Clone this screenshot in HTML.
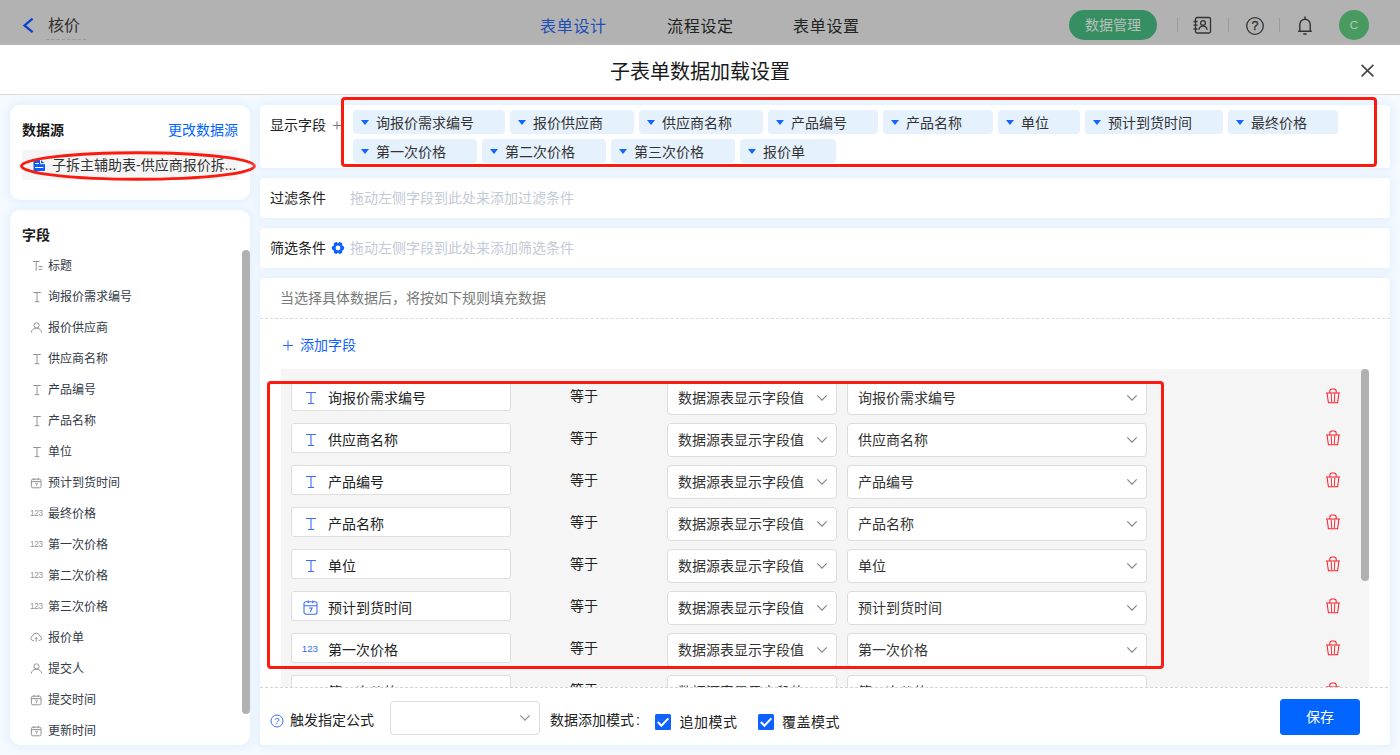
<!DOCTYPE html>
<html lang="zh-CN">
<head>
<meta charset="utf-8">
<title>子表单数据加载设置</title>
<style>
*{box-sizing:border-box;margin:0;padding:0}
html,body{width:1400px;height:755px;overflow:hidden}
body{font-family:"Liberation Sans","Noto Sans CJK SC",sans-serif;font-size:14px;color:#222;background:#f3f8ff;position:relative}
.abs{position:absolute}
.t{position:absolute;white-space:nowrap;line-height:1}
#hdr{left:0;top:0;width:1400px;height:45px;background:linear-gradient(#b2b2b2 0,#b2b2b2 41px,#b8b8b8 45px)}
#ttl{left:0;top:45px;width:1400px;height:50px;background:#fff;border-bottom:1px solid #d9d9d9}
#bg{left:0;top:95px;width:1400px;height:660px;background:#f5faff}
.card{position:absolute;background:#fff;border-radius:10px;box-shadow:0 0 9px 3px #e4f0fe}
.rc{position:absolute;background:#fff;border-radius:4px;left:260px;width:1130px;box-shadow:0 0 9px 3px #e4f0fe}
.tag{position:absolute;height:24px;border-radius:4px;background:#e6f1fe;font-size:14px;line-height:26px;color:#333;padding-left:23px;white-space:nowrap}
.tag:before{content:"";position:absolute;left:8.100px;top:10px;border-left:4.700px solid transparent;border-right:4.700px solid transparent;border-top:5px solid #1166ff}
.fi{position:absolute;left:48px;font-size:12px;color:#333a48;line-height:14px;white-space:nowrap}
.ibox{position:absolute;width:220px;height:30px;background:#fff;border:1px solid #dedede;border-radius:3px}
.itx{position:absolute;font-size:14px;color:#222;line-height:16px;white-space:nowrap}
.sel{position:absolute;height:34px;background:#fff;border:1px solid #dcdcdc;border-radius:4px}
.eq{position:absolute;font-size:14px;color:#222;line-height:16px;white-space:nowrap}
</style>
</head>
<body>
<div id="hdr" class="abs">
<svg class="abs" style="left:20px;top:14px" width="16" height="22" viewBox="0 0 16 22"><path d="M12.600 4.600 L4.500 11.400 L12.600 18.200" fill="none" stroke="#0d42cc" stroke-width="2.300"/></svg>
<div class="t" style="left:48px;top:18px;font-size:16px;color:#2e2e2e;">核价</div>
<div class="abs" style="left:46px;top:39px;width:40px;border-top:1px dashed #999"></div>
<div class="t" style="left:540px;top:18.5px;font-size:16px;color:#1c4db8;letter-spacing:.7px">表单设计</div>
<div class="t" style="left:667px;top:18.5px;font-size:16px;color:#222;letter-spacing:.7px">流程设定</div>
<div class="t" style="left:793px;top:18.5px;font-size:16px;color:#222;letter-spacing:.7px">表单设置</div>
<div class="abs" style="left:1069px;top:10px;width:88px;height:30px;border-radius:15px;background:#368f62;color:#b9bfbb;font-size:14px;line-height:31px;text-align:center">数据管理</div>
<div class="abs" style="left:1177px;top:18px;width:1px;height:14px;background:#9b9b9b"></div>
<div class="abs" style="left:1228px;top:18px;width:1px;height:14px;background:#9b9b9b"></div>
<div class="abs" style="left:1279px;top:18px;width:1px;height:14px;background:#9b9b9b"></div>
<svg class="abs" style="left:1192px;top:16px" width="20" height="19" viewBox="0 0 20 19"><g fill="none" stroke="#333" stroke-width="1.300"><rect x="3.500" y="1.500" width="15" height="15.500" rx="1.500"/><circle cx="11" cy="7" r="2.400"/><path d="M6.800 13.800c.6-2.600 2.200-3.600 4.200-3.600s3.600 1 4.200 3.600"/><path d="M1.500 5.500h4M1.500 9.200h4M1.500 13h4"/></g></svg>
<svg class="abs" style="left:1245px;top:15.500px" width="20" height="20" viewBox="0 0 20 20"><circle cx="10" cy="10" r="8.300" fill="none" stroke="#333" stroke-width="1.300"/><text x="10" y="14.400" font-size="12.500" text-anchor="middle" fill="#333" stroke="#333" stroke-width=".35" font-family="Liberation Sans, sans-serif">?</text></svg>
<svg class="abs" style="left:1295px;top:14px" width="20" height="22" viewBox="0 0 20 22"><g fill="none" stroke="#333" stroke-width="1.400"><path d="M3.200 17.300h13.600M4.800 17.300V10.500a5.200 5.200 0 0 1 10.400 0v6.800"/><path d="M10 5.200V2.600M8.300 20h3.400"/></g></svg>
<div class="abs" style="left:1339px;top:10px;width:30px;height:30px;border-radius:15px;background:#489a61;color:#b6cdb8;font-size:11.500px;line-height:31px;text-align:center">C</div>
</div>
<div id="ttl" class="abs">
<div class="t" style="left:0;width:1400px;text-align:center;top:17px;font-size:20px;color:#1a1a1a">子表单数据加载设置</div>
<svg class="abs" style="left:1360px;top:17.500px" width="15" height="15" viewBox="0 0 15 15"><path d="M1.600 1.900l11.800 11.400M13.400 1.900l-11.800 11.400" stroke="#474747" stroke-width="1.700" fill="none"/></svg>
</div>
<div id="bg" class="abs"></div>
<div class="card" style="left:10px;top:105px;width:240px;height:95px"></div>
<div class="card" style="left:10px;top:210px;width:240px;height:535px"></div>
<div class="t" style="left:22px;top:123px;font-size:14px;color:#1a1a1a;font-weight:bold">数据源</div>
<div class="t" style="left:168px;top:123px;font-size:14px;color:#0265ff;">更改数据源</div>
<div class="abs" style="left:22px;top:150px;width:216px;height:30px;background:#f5f5f5;border-radius:2px"></div>
<svg class="abs" style="left:33px;top:160px" width="13" height="11" viewBox="0 0 13 11"><path d="M.5 0h7.500l4 3.700V11H.5z" fill="#0b5ff8"/><path d="M7.500 0v3.700h4.500" fill="none" stroke="#fff" stroke-width="1"/><path d="M2.100 3.500h3.800M2.100 7.500h8.200" stroke="#fff" stroke-width="1"/></svg>
<div class="t" style="left:52px;top:158px;font-size:14px;color:#333;">子拆主辅助表-供应商报价拆...</div>
<svg class="abs" style="left:14px;top:146.600px" width="250" height="38" viewBox="0 0 250 38"><ellipse cx="124" cy="19" rx="116.500" ry="13.300" fill="none" stroke="#fb1a10" stroke-width="2.900"/></svg>
<div class="t" style="left:22px;top:228px;font-size:14px;color:#1a1a1a;font-weight:bold">字段</div>
<svg class="abs" style="left:31px;top:259.5px" width="13" height="12" viewBox="0 0 13 12"><path d="M1.900 1.500h6.700M5.200 1.500v9.200M7.500 6.500h3.900M7.500 9.300h3.900" fill="none" stroke="#939393" stroke-width="1"/></svg>
<div class="fi" style="top:259.0px">标题</div>
<svg class="abs" style="left:31px;top:290.5px" width="12" height="12" viewBox="0 0 12 12"><path d="M2.200 1.500h7.600M3.700 10.700h4.600M6 1.500v9.200" fill="none" stroke="#939393" stroke-width="1"/></svg>
<div class="fi" style="top:290.0px">询报价需求编号</div>
<svg class="abs" style="left:29.5px;top:322.0px" width="13" height="11" viewBox="0 0 13 11"><g fill="none" stroke="#939393" stroke-width="1"><circle cx="6.500" cy="3.400" r="2.600"/><path d="M1.200 10.600c.5-2.900 2.500-4.400 5.300-4.400s4.800 1.500 5.300 4.400"/></g></svg>
<div class="fi" style="top:321.0px">报价供应商</div>
<svg class="abs" style="left:31px;top:352.5px" width="12" height="12" viewBox="0 0 12 12"><path d="M2.200 1.500h7.600M3.700 10.700h4.600M6 1.500v9.200" fill="none" stroke="#939393" stroke-width="1"/></svg>
<div class="fi" style="top:352.0px">供应商名称</div>
<svg class="abs" style="left:31px;top:383.5px" width="12" height="12" viewBox="0 0 12 12"><path d="M2.200 1.500h7.600M3.700 10.700h4.600M6 1.500v9.200" fill="none" stroke="#939393" stroke-width="1"/></svg>
<div class="fi" style="top:383.0px">产品编号</div>
<svg class="abs" style="left:31px;top:414.5px" width="12" height="12" viewBox="0 0 12 12"><path d="M2.200 1.500h7.600M3.700 10.700h4.600M6 1.500v9.200" fill="none" stroke="#939393" stroke-width="1"/></svg>
<div class="fi" style="top:414.0px">产品名称</div>
<svg class="abs" style="left:31px;top:445.5px" width="12" height="12" viewBox="0 0 12 12"><path d="M2.200 1.500h7.600M3.700 10.700h4.600M6 1.500v9.200" fill="none" stroke="#939393" stroke-width="1"/></svg>
<div class="fi" style="top:445.0px">单位</div>
<svg class="abs" style="left:30px;top:476.5px" width="12" height="12" viewBox="0 0 12 12"><g fill="none" stroke="#939393" stroke-width="1"><rect x="1.400" y="2.200" width="9.600" height="8.600" rx="1.500"/><path d="M1.400 4.600h9.600M4 1v2.200M8.400 1v2.200"/><path d="M5 6.200h2.500L6.200 9.300" stroke-width=".85"/></g></svg>
<div class="fi" style="top:476.0px">预计到货时间</div>
<div class="t" style="left:30px;top:509.5px;font-size:8.200px;color:#939393;letter-spacing:-.3px">123</div>
<div class="fi" style="top:507.0px">最终价格</div>
<div class="t" style="left:30px;top:540.5px;font-size:8.200px;color:#939393;letter-spacing:-.3px">123</div>
<div class="fi" style="top:538.0px">第一次价格</div>
<div class="t" style="left:30px;top:571.5px;font-size:8.200px;color:#939393;letter-spacing:-.3px">123</div>
<div class="fi" style="top:569.0px">第二次价格</div>
<div class="t" style="left:30px;top:602.5px;font-size:8.200px;color:#939393;letter-spacing:-.3px">123</div>
<div class="fi" style="top:600.0px">第三次价格</div>
<svg class="abs" style="left:29.8px;top:631.9px" width="12.400" height="10.600" viewBox="0 0 14 12"><g fill="none" stroke="#939393" stroke-width="1.100"><path d="M4.600 9.600H3.600a2.600 2.600 0 0 1-.5-5.150A4 4 0 0 1 10.900 4.400a2.650 2.650 0 0 1-.3 5.200h-1"/><path d="M7 11V6.400M5.300 8L7 6.300 8.700 8"/></g></svg>
<div class="fi" style="top:631.0px">报价单</div>
<svg class="abs" style="left:29.5px;top:663.0px" width="13" height="11" viewBox="0 0 13 11"><g fill="none" stroke="#939393" stroke-width="1"><circle cx="6.500" cy="3.400" r="2.600"/><path d="M1.200 10.600c.5-2.900 2.500-4.400 5.300-4.400s4.800 1.500 5.300 4.400"/></g></svg>
<div class="fi" style="top:662.0px">提交人</div>
<svg class="abs" style="left:30px;top:693.5px" width="12" height="12" viewBox="0 0 12 12"><g fill="none" stroke="#939393" stroke-width="1"><rect x="1.400" y="2.200" width="9.600" height="8.600" rx="1.500"/><path d="M1.400 4.600h9.600M4 1v2.200M8.400 1v2.200"/><path d="M5 6.200h2.500L6.200 9.300" stroke-width=".85"/></g></svg>
<div class="fi" style="top:693.0px">提交时间</div>
<svg class="abs" style="left:30px;top:724.5px" width="12" height="12" viewBox="0 0 12 12"><g fill="none" stroke="#939393" stroke-width="1"><rect x="1.400" y="2.200" width="9.600" height="8.600" rx="1.500"/><path d="M1.400 4.600h9.600M4 1v2.200M8.400 1v2.200"/><path d="M5 6.200h2.500L6.200 9.300" stroke-width=".85"/></g></svg>
<div class="fi" style="top:724.0px">更新时间</div>
<div class="abs" style="left:242px;top:250px;width:8px;height:464px;border-radius:4px;background:#b1b1b1"></div>
<div class="rc" style="top:105px;height:63px"></div>
<div class="rc" style="top:178px;height:40px"></div>
<div class="rc" style="top:228px;height:40px"></div>
<div class="rc" style="top:278px;height:467px"></div>
<div class="t" style="left:270px;top:118px;font-size:14px;color:#222;">显示字段</div>
<svg class="abs" style="left:332px;top:120px" width="10" height="10" viewBox="0 0 10 10"><path d="M1 5.500h8M5 1.500v8" stroke="#777" stroke-width="1" fill="none"/></svg>
<div class="tag" style="left:353px;top:110px;width:152px">询报价需求编号</div>
<div class="tag" style="left:510px;top:110px;width:124px">报价供应商</div>
<div class="tag" style="left:639px;top:110px;width:124px">供应商名称</div>
<div class="tag" style="left:768px;top:110px;width:110px">产品编号</div>
<div class="tag" style="left:883px;top:110px;width:110px">产品名称</div>
<div class="tag" style="left:998px;top:110px;width:82px">单位</div>
<div class="tag" style="left:1085px;top:110px;width:138px">预计到货时间</div>
<div class="tag" style="left:1228px;top:110px;width:110px">最终价格</div>
<div class="tag" style="left:353px;top:139px;width:124px">第一次价格</div>
<div class="tag" style="left:482px;top:139px;width:124px">第二次价格</div>
<div class="tag" style="left:611px;top:139px;width:124px">第三次价格</div>
<div class="tag" style="left:740px;top:139px;width:96px">报价单</div>
<div class="abs" style="left:341px;top:97px;width:1036px;height:70px;border:3px solid #fb1a10;border-radius:4px"></div>
<div class="t" style="left:270px;top:191px;font-size:14px;color:#222;">过滤条件</div>
<div class="t" style="left:350px;top:191px;font-size:14px;color:#c3cad6;">拖动左侧字段到此处来添加过滤条件</div>
<div class="t" style="left:270px;top:241px;font-size:14px;color:#222;">筛选条件</div>
<svg class="abs" style="left:330.500px;top:241px" width="14" height="14" viewBox="-7 -7 14 14"><g fill="#0d62ff"><circle r="5.100"/><rect x="-2.100" y="-6.100" width="4.200" height="4" rx="1.400" transform="rotate(30)"/><rect x="-2.100" y="-6.100" width="4.200" height="4" rx="1.400" transform="rotate(90)"/><rect x="-2.100" y="-6.100" width="4.200" height="4" rx="1.400" transform="rotate(150)"/><rect x="-2.100" y="-6.100" width="4.200" height="4" rx="1.400" transform="rotate(210)"/><rect x="-2.100" y="-6.100" width="4.200" height="4" rx="1.400" transform="rotate(270)"/><rect x="-2.100" y="-6.100" width="4.200" height="4" rx="1.400" transform="rotate(330)"/></g><circle r="2.400" fill="#fff"/></svg>
<div class="t" style="left:350px;top:241px;font-size:14px;color:#c3cad6;">拖动左侧字段到此处来添加筛选条件</div>
<div class="t" style="left:280px;top:291px;font-size:14px;color:#7a7a7a;">当选择具体数据后，将按如下规则填充数据</div>
<div class="abs" style="left:260px;top:318px;width:1130px;border-top:1px dashed #dcdcdc"></div>
<svg class="abs" style="left:283px;top:340px" width="10" height="11" viewBox="0 0 10 11"><path d="M0 5.500h10M5 .5v10" stroke="#2a6bff" stroke-width="1" fill="none"/></svg>
<div class="t" style="left:300px;top:338px;font-size:14px;color:#0f62fe;">添加字段</div>
<div class="abs" id="ga" style="left:281px;top:369px;width:1088px;height:318px;background:#f5f5f5;overflow:hidden">
<div class="ibox" style="left:10px;top:12px"></div>
<svg class="abs" style="left:23px;top:22px" width="14" height="14" viewBox="0 0 14 14"><path d="M2 1.500h10M4 12.500h6M7 1.500v11" fill="none" stroke="#3b6cf6" stroke-width="1.100"/></svg>
<div class="itx" style="left:47px;top:21px">询报价需求编号</div>
<div class="eq" style="left:289px;top:19px">等于</div>
<div class="sel" style="left:386px;top:12px;width:170px"></div>
<div class="itx" style="left:397px;top:21px;color:#333">数据源表显示字段值</div>
<svg class="abs" style="left:534.5px;top:24.8px" width="12" height="8" viewBox="0 0 12 8"><path d="M1.300 1.300l4.700 4.900 4.700-4.900" fill="none" stroke="#808080" stroke-width="1.100"/></svg>
<div class="sel" style="left:566px;top:12px;width:300px"></div>
<div class="itx" style="left:577px;top:21px;color:#333">询报价需求编号</div>
<svg class="abs" style="left:844.5px;top:24.8px" width="12" height="8" viewBox="0 0 12 8"><path d="M1.300 1.300l4.700 4.900 4.700-4.900" fill="none" stroke="#808080" stroke-width="1.100"/></svg>
<svg class="abs" style="left:1044px;top:18.5px" width="16" height="16" viewBox="0 0 16 16"><g fill="none" stroke="#f8222f" stroke-width="1.050"><path d="M1 5h14"/><path d="M4.800 5V3.200a2.200 2.200 0 0 1 2.200-2.200h2a2.200 2.200 0 0 1 2.200 2.200V5"/><path d="M2.100 5.200l1.300 9.600h9.200l1.300-9.600"/><path d="M6.200 5.600l.5 8.400M9.800 5.600l-.5 8.400" stroke-width=".95"/></g></svg>
<div class="ibox" style="left:10px;top:54px"></div>
<svg class="abs" style="left:23px;top:64px" width="14" height="14" viewBox="0 0 14 14"><path d="M2 1.500h10M4 12.500h6M7 1.500v11" fill="none" stroke="#3b6cf6" stroke-width="1.100"/></svg>
<div class="itx" style="left:47px;top:63px">供应商名称</div>
<div class="eq" style="left:289px;top:61px">等于</div>
<div class="sel" style="left:386px;top:54px;width:170px"></div>
<div class="itx" style="left:397px;top:63px;color:#333">数据源表显示字段值</div>
<svg class="abs" style="left:534.5px;top:66.8px" width="12" height="8" viewBox="0 0 12 8"><path d="M1.300 1.300l4.700 4.900 4.700-4.900" fill="none" stroke="#808080" stroke-width="1.100"/></svg>
<div class="sel" style="left:566px;top:54px;width:300px"></div>
<div class="itx" style="left:577px;top:63px;color:#333">供应商名称</div>
<svg class="abs" style="left:844.5px;top:66.8px" width="12" height="8" viewBox="0 0 12 8"><path d="M1.300 1.300l4.700 4.900 4.700-4.900" fill="none" stroke="#808080" stroke-width="1.100"/></svg>
<svg class="abs" style="left:1044px;top:60.5px" width="16" height="16" viewBox="0 0 16 16"><g fill="none" stroke="#f8222f" stroke-width="1.050"><path d="M1 5h14"/><path d="M4.800 5V3.200a2.200 2.200 0 0 1 2.200-2.200h2a2.200 2.200 0 0 1 2.200 2.200V5"/><path d="M2.100 5.200l1.300 9.600h9.200l1.300-9.600"/><path d="M6.200 5.600l.5 8.400M9.800 5.600l-.5 8.400" stroke-width=".95"/></g></svg>
<div class="ibox" style="left:10px;top:96px"></div>
<svg class="abs" style="left:23px;top:106px" width="14" height="14" viewBox="0 0 14 14"><path d="M2 1.500h10M4 12.500h6M7 1.500v11" fill="none" stroke="#3b6cf6" stroke-width="1.100"/></svg>
<div class="itx" style="left:47px;top:105px">产品编号</div>
<div class="eq" style="left:289px;top:103px">等于</div>
<div class="sel" style="left:386px;top:96px;width:170px"></div>
<div class="itx" style="left:397px;top:105px;color:#333">数据源表显示字段值</div>
<svg class="abs" style="left:534.5px;top:108.8px" width="12" height="8" viewBox="0 0 12 8"><path d="M1.300 1.300l4.700 4.900 4.700-4.900" fill="none" stroke="#808080" stroke-width="1.100"/></svg>
<div class="sel" style="left:566px;top:96px;width:300px"></div>
<div class="itx" style="left:577px;top:105px;color:#333">产品编号</div>
<svg class="abs" style="left:844.5px;top:108.8px" width="12" height="8" viewBox="0 0 12 8"><path d="M1.300 1.300l4.700 4.900 4.700-4.900" fill="none" stroke="#808080" stroke-width="1.100"/></svg>
<svg class="abs" style="left:1044px;top:102.5px" width="16" height="16" viewBox="0 0 16 16"><g fill="none" stroke="#f8222f" stroke-width="1.050"><path d="M1 5h14"/><path d="M4.800 5V3.200a2.200 2.200 0 0 1 2.200-2.200h2a2.200 2.200 0 0 1 2.200 2.200V5"/><path d="M2.100 5.200l1.300 9.600h9.200l1.300-9.600"/><path d="M6.200 5.600l.5 8.400M9.800 5.600l-.5 8.400" stroke-width=".95"/></g></svg>
<div class="ibox" style="left:10px;top:138px"></div>
<svg class="abs" style="left:23px;top:148px" width="14" height="14" viewBox="0 0 14 14"><path d="M2 1.500h10M4 12.500h6M7 1.500v11" fill="none" stroke="#3b6cf6" stroke-width="1.100"/></svg>
<div class="itx" style="left:47px;top:147px">产品名称</div>
<div class="eq" style="left:289px;top:145px">等于</div>
<div class="sel" style="left:386px;top:138px;width:170px"></div>
<div class="itx" style="left:397px;top:147px;color:#333">数据源表显示字段值</div>
<svg class="abs" style="left:534.5px;top:150.8px" width="12" height="8" viewBox="0 0 12 8"><path d="M1.300 1.300l4.700 4.900 4.700-4.900" fill="none" stroke="#808080" stroke-width="1.100"/></svg>
<div class="sel" style="left:566px;top:138px;width:300px"></div>
<div class="itx" style="left:577px;top:147px;color:#333">产品名称</div>
<svg class="abs" style="left:844.5px;top:150.8px" width="12" height="8" viewBox="0 0 12 8"><path d="M1.300 1.300l4.700 4.900 4.700-4.900" fill="none" stroke="#808080" stroke-width="1.100"/></svg>
<svg class="abs" style="left:1044px;top:144.5px" width="16" height="16" viewBox="0 0 16 16"><g fill="none" stroke="#f8222f" stroke-width="1.050"><path d="M1 5h14"/><path d="M4.800 5V3.200a2.200 2.200 0 0 1 2.200-2.200h2a2.200 2.200 0 0 1 2.200 2.200V5"/><path d="M2.100 5.200l1.300 9.600h9.200l1.300-9.600"/><path d="M6.200 5.600l.5 8.400M9.800 5.600l-.5 8.400" stroke-width=".95"/></g></svg>
<div class="ibox" style="left:10px;top:180px"></div>
<svg class="abs" style="left:23px;top:190px" width="14" height="14" viewBox="0 0 14 14"><path d="M2 1.500h10M4 12.500h6M7 1.500v11" fill="none" stroke="#3b6cf6" stroke-width="1.100"/></svg>
<div class="itx" style="left:47px;top:189px">单位</div>
<div class="eq" style="left:289px;top:187px">等于</div>
<div class="sel" style="left:386px;top:180px;width:170px"></div>
<div class="itx" style="left:397px;top:189px;color:#333">数据源表显示字段值</div>
<svg class="abs" style="left:534.5px;top:192.8px" width="12" height="8" viewBox="0 0 12 8"><path d="M1.300 1.300l4.700 4.900 4.700-4.900" fill="none" stroke="#808080" stroke-width="1.100"/></svg>
<div class="sel" style="left:566px;top:180px;width:300px"></div>
<div class="itx" style="left:577px;top:189px;color:#333">单位</div>
<svg class="abs" style="left:844.5px;top:192.8px" width="12" height="8" viewBox="0 0 12 8"><path d="M1.300 1.300l4.700 4.900 4.700-4.900" fill="none" stroke="#808080" stroke-width="1.100"/></svg>
<svg class="abs" style="left:1044px;top:186.5px" width="16" height="16" viewBox="0 0 16 16"><g fill="none" stroke="#f8222f" stroke-width="1.050"><path d="M1 5h14"/><path d="M4.800 5V3.200a2.200 2.200 0 0 1 2.200-2.200h2a2.200 2.200 0 0 1 2.200 2.200V5"/><path d="M2.100 5.200l1.300 9.600h9.200l1.300-9.600"/><path d="M6.200 5.600l.5 8.400M9.800 5.600l-.5 8.400" stroke-width=".95"/></g></svg>
<div class="ibox" style="left:10px;top:222px"></div>
<svg class="abs" style="left:22px;top:230.5px" width="15" height="15" viewBox="0 0 15 15"><g fill="none" stroke="#3b6cf6" stroke-width="1.050"><rect x="1" y="1.800" width="13" height="12.400" rx="2"/><path d="M1 5.700h13M5.200 .4v2.800M9.800 .4v2.800"/><path d="M5.800 8h3.300L7.300 12" stroke-width="1.050"/></g></svg>
<div class="itx" style="left:47px;top:231px">预计到货时间</div>
<div class="eq" style="left:289px;top:229px">等于</div>
<div class="sel" style="left:386px;top:222px;width:170px"></div>
<div class="itx" style="left:397px;top:231px;color:#333">数据源表显示字段值</div>
<svg class="abs" style="left:534.5px;top:234.8px" width="12" height="8" viewBox="0 0 12 8"><path d="M1.300 1.300l4.700 4.900 4.700-4.900" fill="none" stroke="#808080" stroke-width="1.100"/></svg>
<div class="sel" style="left:566px;top:222px;width:300px"></div>
<div class="itx" style="left:577px;top:231px;color:#333">预计到货时间</div>
<svg class="abs" style="left:844.5px;top:234.8px" width="12" height="8" viewBox="0 0 12 8"><path d="M1.300 1.300l4.700 4.900 4.700-4.900" fill="none" stroke="#808080" stroke-width="1.100"/></svg>
<svg class="abs" style="left:1044px;top:228.5px" width="16" height="16" viewBox="0 0 16 16"><g fill="none" stroke="#f8222f" stroke-width="1.050"><path d="M1 5h14"/><path d="M4.800 5V3.200a2.200 2.200 0 0 1 2.200-2.200h2a2.200 2.200 0 0 1 2.200 2.200V5"/><path d="M2.100 5.200l1.300 9.600h9.200l1.300-9.600"/><path d="M6.200 5.600l.5 8.400M9.800 5.600l-.5 8.400" stroke-width=".95"/></g></svg>
<div class="ibox" style="left:10px;top:264px"></div>
<div class="t" style="left:20.7px;top:274.8px;font-size:9.800px;color:#3b6cf6">123</div>
<div class="itx" style="left:47px;top:273px">第一次价格</div>
<div class="eq" style="left:289px;top:271px">等于</div>
<div class="sel" style="left:386px;top:264px;width:170px"></div>
<div class="itx" style="left:397px;top:273px;color:#333">数据源表显示字段值</div>
<svg class="abs" style="left:534.5px;top:276.8px" width="12" height="8" viewBox="0 0 12 8"><path d="M1.300 1.300l4.700 4.900 4.700-4.900" fill="none" stroke="#808080" stroke-width="1.100"/></svg>
<div class="sel" style="left:566px;top:264px;width:300px"></div>
<div class="itx" style="left:577px;top:273px;color:#333">第一次价格</div>
<svg class="abs" style="left:844.5px;top:276.8px" width="12" height="8" viewBox="0 0 12 8"><path d="M1.300 1.300l4.700 4.900 4.700-4.900" fill="none" stroke="#808080" stroke-width="1.100"/></svg>
<svg class="abs" style="left:1044px;top:270.5px" width="16" height="16" viewBox="0 0 16 16"><g fill="none" stroke="#f8222f" stroke-width="1.050"><path d="M1 5h14"/><path d="M4.800 5V3.200a2.200 2.200 0 0 1 2.200-2.200h2a2.200 2.200 0 0 1 2.200 2.200V5"/><path d="M2.100 5.200l1.300 9.600h9.200l1.300-9.600"/><path d="M6.200 5.600l.5 8.400M9.800 5.600l-.5 8.400" stroke-width=".95"/></g></svg>
<div class="ibox" style="left:10px;top:306px"></div>
<div class="t" style="left:20.7px;top:316.8px;font-size:9.800px;color:#3b6cf6">123</div>
<div class="itx" style="left:47px;top:315px">第二次价格</div>
<div class="eq" style="left:289px;top:313px">等于</div>
<div class="sel" style="left:386px;top:306px;width:170px"></div>
<div class="itx" style="left:397px;top:315px;color:#333">数据源表显示字段值</div>
<svg class="abs" style="left:534.5px;top:318.8px" width="12" height="8" viewBox="0 0 12 8"><path d="M1.300 1.300l4.700 4.900 4.700-4.900" fill="none" stroke="#808080" stroke-width="1.100"/></svg>
<div class="sel" style="left:566px;top:306px;width:300px"></div>
<div class="itx" style="left:577px;top:315px;color:#333">第二次价格</div>
<svg class="abs" style="left:844.5px;top:318.8px" width="12" height="8" viewBox="0 0 12 8"><path d="M1.300 1.300l4.700 4.900 4.700-4.900" fill="none" stroke="#808080" stroke-width="1.100"/></svg>
<svg class="abs" style="left:1044px;top:312.5px" width="16" height="16" viewBox="0 0 16 16"><g fill="none" stroke="#f8222f" stroke-width="1.050"><path d="M1 5h14"/><path d="M4.800 5V3.200a2.200 2.200 0 0 1 2.200-2.200h2a2.200 2.200 0 0 1 2.200 2.200V5"/><path d="M2.100 5.200l1.300 9.600h9.200l1.300-9.600"/><path d="M6.200 5.600l.5 8.400M9.800 5.600l-.5 8.400" stroke-width=".95"/></g></svg>
</div>
<div class="abs" style="left:1361px;top:369px;width:8px;height:212px;border-radius:4px;background:#b1b1b1"></div>
<div class="abs" style="left:267px;top:381px;width:897px;height:288px;border:3px solid #fb1a10;border-radius:4px"></div>
<div class="abs" style="left:260px;top:687px;width:1130px;height:58px;background:#fff;border-radius:0 0 4px 4px"></div>
<div class="abs" style="left:260px;top:687px;width:1130px;height:1px;background:repeating-linear-gradient(90deg,#d4d4d4 0 3px,transparent 3px 5px)"></div>
<svg class="abs" style="left:270px;top:713.500px" width="14" height="14" viewBox="0 0 14 14"><circle cx="7" cy="7" r="6" fill="none" stroke="#3b6cf6" stroke-width="1"/><text x="7" y="10.300" font-size="9.500" text-anchor="middle" fill="#3b6cf6" font-family="Liberation Sans, sans-serif">?</text></svg>
<div class="t" style="left:290px;top:713px;font-size:14px;color:#222;">触发指定公式</div>
<div class="sel" style="left:390px;top:701px;width:150px"></div>
<svg class="abs" style="left:518.5px;top:714px" width="12" height="8" viewBox="0 0 12 8"><path d="M1.300 1.300l4.700 4.900 4.700-4.900" fill="none" stroke="#8a8a8a" stroke-width="1.100"/></svg>
<div class="t" style="left:550px;top:713px;font-size:14px;color:#222;">数据添加模式<span style="margin-left:2px">:</span></div>
<svg class="abs" style="left:655px;top:714px" width="16" height="16" viewBox="0 0 16 16"><rect width="16" height="16" rx="1.500" fill="#0f62ff"/><path d="M2.800 8l3.600 3.700 6.900-7.300" fill="none" stroke="#fff" stroke-width="2"/></svg>
<div class="t" style="left:679.5px;top:715px;font-size:14px;color:#222;letter-spacing:.5px">追加模式</div>
<svg class="abs" style="left:758px;top:714px" width="16" height="16" viewBox="0 0 16 16"><rect width="16" height="16" rx="1.500" fill="#0f62ff"/><path d="M2.800 8l3.600 3.700 6.900-7.300" fill="none" stroke="#fff" stroke-width="2"/></svg>
<div class="t" style="left:782px;top:715px;font-size:14px;color:#222;letter-spacing:.5px">覆盖模式</div>
<div class="abs" style="left:1280px;top:699px;width:80px;height:36px;border-radius:3.500px;background:#0265ff;color:#fff;font-size:14px;line-height:36px;text-align:center">保存</div>
</body>
</html>
